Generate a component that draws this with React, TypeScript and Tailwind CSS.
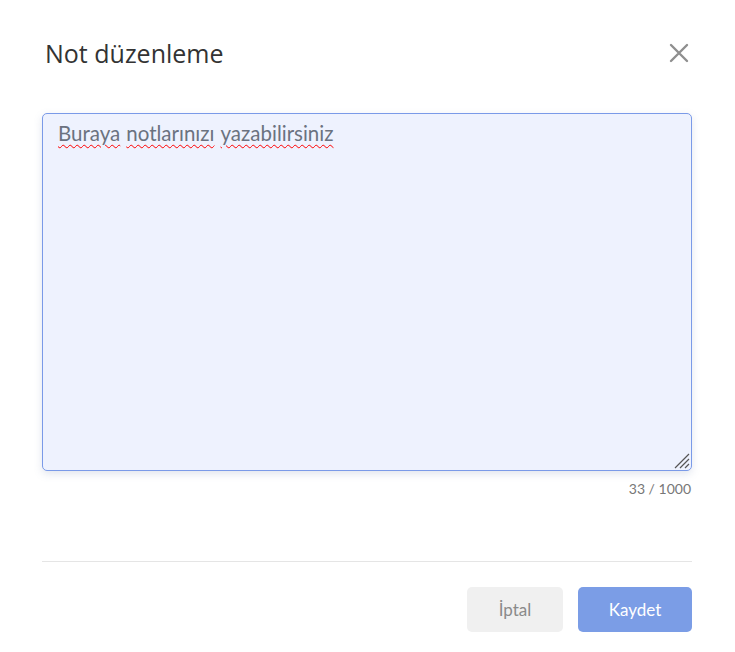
import React from "react";

export default function App() {
  const words = ["Buraya", "notlarınızı", "yazabilirsiniz"];
  return (
    <div className="w-[735px] h-[652px] bg-white relative" style={{ fontFamily: "'Open Sans', sans-serif" }}>
      <div className="pl-[42px] pr-[43px] pt-[36px]">
        <div className="flex items-center justify-between">
          <h1 className="pl-[3px] text-[25px] leading-[34px] text-[#333] font-normal">Not düzenleme</h1>
          <button className="w-[22px] h-[22px] mr-[2px] flex items-center justify-center text-[#8f8f8f]">
            <svg width="20" height="20" viewBox="0 0 20 20" fill="none" stroke="currentColor" strokeWidth="2.4" strokeLinecap="round">
              <path d="M2 2 L18 18 M18 2 L2 18" />
            </svg>
          </button>
        </div>
        <div className="mt-[43px] relative h-[358px] rounded-[5px] border border-[#7a9ae8] bg-[#eef2fe] shadow-[0_3px_8px_rgba(90,110,160,0.18)] px-[15px] pt-[6px]">
          <p className="text-[20.5px] leading-[26px] text-[#6b7280] flex gap-[6px]" style={{ fontFamily: "Lato, sans-serif" }}>
            {words.map((w) => (
              <span key={w} className="underline decoration-wavy decoration-[#f00] decoration-1 underline-offset-[3px]">{w}</span>
            ))}
          </p>
          <svg className="absolute right-[1px] bottom-[1px]" width="18" height="18" viewBox="0 0 18 18" stroke="#555" strokeWidth="1.2">
            <path d="M17 3 L3 17 M17 8 L8 17 M17 13 L13 17" />
          </svg>
        </div>
        <div className="text-right text-[14px] leading-[18px] text-[#777] mt-[9px] pr-[1px]" style={{ fontFamily: "Lato, sans-serif" }}>33 / 1000</div>
        <div className="mt-[63px] h-px bg-[#e5e5e5]" />
        <div className="mt-[25px] flex justify-end gap-[15px]">
          <button className="w-[96px] h-[45px] rounded-[5px] bg-[#f0f0f0] text-[#8a8a8a] text-[17px]" style={{ fontFamily: "Lato, sans-serif" }}>İptal</button>
          <button className="w-[114px] h-[45px] rounded-[5px] bg-[#7b9de6] text-white text-[17px]" style={{ fontFamily: "Lato, sans-serif" }}>Kaydet</button>
        </div>
      </div>
    </div>
  );
}
